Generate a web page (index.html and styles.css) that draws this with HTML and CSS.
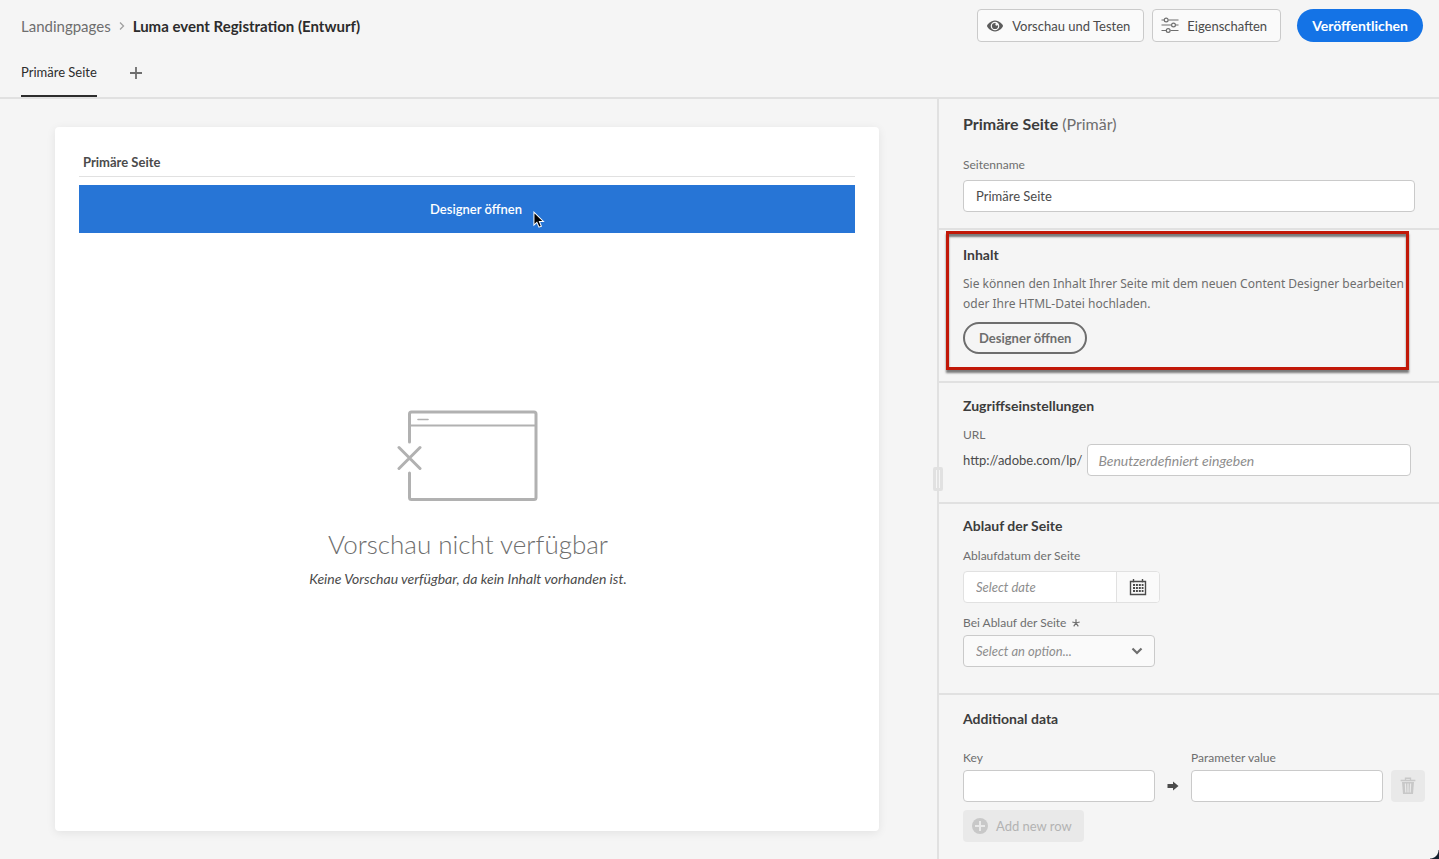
FILE: index.html
```html
<!DOCTYPE html>
<html lang="de">
<head>
<meta charset="utf-8">
<meta name="viewport" content="width=device-width, initial-scale=1">
<title>Luma event Registration (Entwurf)</title>
<link rel="stylesheet" href="styles.css">
</head>
<body>
<div class="app">
  <header class="header">
    <div class="topbar">
      <nav class="breadcrumb" aria-label="Breadcrumb">
        <a class="crumb" href="#">Landingpages</a>
        <svg class="crumb-arrow" width="6" height="10" viewBox="0 0 6 10"><path d="M1 1.500 4.500 5 1 8.500" fill="none" stroke="#a0a0a0" stroke-width="1.300"/></svg>
        <h1 class="page-title">Luma event Registration (Entwurf)</h1>
      </nav>
      <div class="actions">
        <button class="btn" type="button">
          <svg width="18" height="18" viewBox="0 0 18 18"><path d="M9 3.600C4.600 3.600 1 7.800 1 9s3.600 5.400 8 5.400S17 10.200 17 9s-3.600-5.400-8-5.400z" fill="#5c5c5c"/><circle cx="9" cy="9" r="4.300" fill="#fafafa"/><path d="M9 5.900a3.100 3.100 0 1 0 3.100 3.100c0-.4-.1-.7-.2-1a1.300 1.300 0 0 1-1.200.7A1.400 1.400 0 0 1 9.300 7.300c0-.6.300-1 .7-1.200-.3-.1-.6-.2-1-.2z" fill="#5c5c5c"/></svg>
          <span>Vorschau und Testen</span>
        </button>
        <button class="btn" type="button">
          <svg width="18" height="18" viewBox="0 0 18 18" fill="none" stroke="#6e6e6e" stroke-width="1.200"><path d="M.5 3H3M7.500 3H17.500M.5 8H10M15 8H17.500M.5 13.500H5M9.500 13.500H17.500"/><circle cx="5.200" cy="3" r="1.900"/><circle cx="12.500" cy="8" r="1.900"/><circle cx="7.200" cy="13.500" r="1.900"/></svg>
          <span>Eigenschaften</span>
        </button>
        <button class="btn-primary" type="button">Veröffentlichen</button>
      </div>
    </div>
    <div class="tabs">
      <button class="tab" type="button">Primäre Seite</button>
      <button class="tab-add" type="button" aria-label="Seite hinzufügen">
        <svg width="14" height="14" viewBox="0 0 14 14"><path d="M7 1v12M1 7h12" stroke="#6e6e6e" stroke-width="1.800"/></svg>
      </button>
    </div>
  </header>

  <main class="workspace">
    <section class="canvas">
      <article class="card">
        <h2 class="card-title">Primäre Seite</h2>
        <button class="banner" type="button">Designer öffnen
          <svg class="cursor" width="12" height="18" viewBox="0 0 13 19"><path d="M1 1v14l3.200-3 2.300 5.300 2.600-1.100L6.900 11H11.300z" fill="#000" stroke="#fff" stroke-width="1.100"/></svg>
        </button>
        <div class="empty">
          <svg class="empty-art" width="142" height="92" viewBox="0 0 142 92" fill="none" stroke="#b1b1b1" stroke-width="3" stroke-linecap="round"><path d="M12.500 32V4q0-2 2-2H137q2 0 2 2V87.500q0 2-2 2H14.500q-2 0-2-2V63"/><path d="M13 15.500H138" stroke-width="2"/><path d="M21 9.500H31" stroke-width="1.600"/><path d="M2 37.500 23 58.500M23 37.500 2 58.500"/></svg>
          <h2 class="empty-title">Vorschau nicht verfügbar</h2>
          <p class="empty-text">Keine Vorschau verfügbar, da kein Inhalt vorhanden ist.</p>
        </div>
      </article>
    </section>

    <aside class="panel">
      <span class="handle"></span>
      <section class="group group-name">
        <h2 class="panel-title">Primäre Seite <span class="muted">(Primär)</span></h2>
        <label class="label" for="name">Seitenname</label>
        <input class="input" id="name" type="text" value="Primäre Seite">
      </section>
      <section class="group group-content">
        <div class="highlight">
          <h3 class="group-title">Inhalt</h3>
          <p class="desc">Sie können den Inhalt Ihrer Seite mit dem neuen Content Designer bearbeiten oder Ihre HTML-Datei hochladen.</p>
          <button class="btn-outline" type="button">Designer öffnen</button>
        </div>
      </section>
      <section class="group group-access">
        <h3 class="group-title">Zugriffseinstellungen</h3>
        <label class="label" for="url">URL</label>
        <div class="url-row">
          <span class="url-prefix">http://adobe.com/lp/</span>
          <input class="input" id="url" type="text" placeholder="Benutzerdefiniert eingeben">
        </div>
      </section>
      <section class="group group-expiry">
        <h3 class="group-title">Ablauf der Seite</h3>
        <label class="label" for="date">Ablaufdatum der Seite</label>
        <div class="date">
          <input class="date-input" id="date" type="text" placeholder="Select date">
          <button class="date-btn" type="button" aria-label="Kalender">
            <svg width="18" height="18" viewBox="0 0 18 18"><path d="M1.500 3.500H16.500V16.500H1.500zM4.500 1V4.500M13.500 1V4.500" fill="none" stroke="#4b4b4b" stroke-width="1.400"/><path d="M4 7H14.500M4 10H14.500M4 13H14.500" stroke="#4b4b4b" stroke-width="2" stroke-dasharray="2 .9"/></svg>
          </button>
        </div>
        <label class="label" for="onexpiry">Bei Ablauf der Seite
          <svg class="star" width="8" height="8" viewBox="0 0 8 8"><path d="M4 .2V4M.3 3 4 4 7.700 3M1.700 7.300 4 4 6.300 7.300" fill="none" stroke="#6e6e6e" stroke-width="1.200"/></svg>
        </label>
        <div class="select-wrap">
          <select class="select" id="onexpiry"><option>Select an option...</option></select>
          <svg class="select-arrow" width="12" height="8" viewBox="0 0 12 8"><path d="M1.500 1.500 6 6 10.500 1.500" fill="none" stroke="#6e6e6e" stroke-width="2.200"/></svg>
        </div>
      </section>
      <section class="group group-data">
        <h3 class="group-title">Additional data</h3>
        <div class="pairs">
          <label class="label pair-label" for="key">Key</label>
          <label class="label pair-label pair-value" for="value">Parameter value</label>
          <input class="input pair-key" id="key" type="text">
          <svg class="pair-arrow" width="12" height="10" viewBox="0 0 12 10"><path d="M.5 3H6V.5L11.500 5 6 9.500V7H.5z" fill="#4b4b4b"/></svg>
          <input class="input" id="value" type="text">
          <button class="btn-trash" type="button" disabled aria-label="Zeile löschen">
            <svg width="16" height="18" viewBox="0 0 16 18"><path d="M5.500 3V1.300H10.500V3M.6 3.500H15.400" fill="none" stroke="#c8c8c8" stroke-width="1.400"/><path d="M2 5H14L13 17H3z" fill="#c8c8c8"/><path d="M5.400 6.500 5.800 15.500M8 6.500V15.500M10.600 6.500 10.200 15.500" stroke="#e9e9e9" stroke-width="1.200"/></svg>
          </button>
        </div>
        <button class="btn-add" type="button" disabled>
          <svg width="16" height="16" viewBox="0 0 16 16"><circle cx="8" cy="8" r="8" fill="#c8c8c8"/><path d="M8 3V13M3 8H13" stroke="#e9e9e9" stroke-width="2"/></svg>
          <span>Add new row</span>
        </button>
      </section>
      <span class="corner"></span>
    </aside>
  </main>
</div>
</body>
</html>
```
FILE: styles.css
```css
* { box-sizing: border-box; }

body {
  margin: 0;
  background: #f5f5f5;
  color: #4b4b4b;
  font: 13px/20px Lato, "Noto Sans", sans-serif;
}

h1, h2, h3, p { margin: 0; }
button, input, select { font: inherit; color: inherit; margin: 0; }
button { cursor: pointer; }
svg { flex: none; }

.app { display: flex; flex-direction: column; min-height: 100vh; }

.header { border-bottom: 2px solid #e1e1e1; }
.topbar { display: flex; justify-content: space-between; align-items: flex-start; padding: 9px 16px 0 21px; }
.breadcrumb { display: flex; align-items: center; gap: 8px; height: 34px; font-size: 15px; }
.crumb { color: #6e6e6e; text-decoration: none; }
.page-title { color: #2c2c2c; font-size: 15px; font-weight: 700; }
.actions { display: flex; gap: 8px; }
.btn { display: flex; align-items: center; gap: 8px; height: 33px; padding: 0 13px 0 8px; border: 1px solid #cacaca; border-radius: 4px; background: #fafafa; }
.btn-primary { height: 33px; margin-left: 8px; padding: 0 15px; border: 0; border-radius: 17px; background: #1473e6; color: #fff; font-size: 14px; font-weight: 700; }

.tabs { display: flex; gap: 32px; padding: 6px 21px 0; }
.tab { height: 48px; padding: 0; border: 0; border-bottom: 2px solid #2c2c2c; background: none; color: #2c2c2c; }
.tab-add { display: flex; align-items: center; height: 48px; padding: 0; border: 0; background: none; }

.workspace { flex: 1; display: grid; grid-template-columns: minmax(0, 1fr) 502px; }
.canvas { display: flex; padding: 28px 58px 28px 55px; }
.card { flex: 1; display: flex; flex-direction: column; padding: 24px; border-radius: 4px; background: #fff; box-shadow: 0 2px 10px rgba(0, 0, 0, .08); }
.card-title { padding: 1px 4px 4px; border-bottom: 1px solid #e1e1e1; font-size: 13px; font-weight: 700; }
.banner { position: relative; height: 48px; margin-top: 8px; padding: 0 0 0 18px; border: 0; background: #2775d6; color: #fff; font-weight: 600; }
.cursor { position: absolute; left: calc(50% + 66px); top: 26px; }
.empty { display: flex; flex-direction: column; align-items: center; padding: 177px 0 0 2px; text-align: center; }
.empty-title { margin-top: 22px; color: #6e6e6e; font-size: 26px; line-height: 40px; font-weight: 300; }
.empty-text { margin-top: 5px; font-size: 14px; font-style: italic; }

.panel { position: relative; border-left: 2px solid #e1e1e1; }
.handle { position: absolute; left: -6px; top: 368px; width: 10px; height: 24px; border: 3px solid #e1e1e1; border-radius: 2px; background: linear-gradient(90deg, #f5f5f5 1px, #e1e1e1 1px 3px, #f5f5f5 3px); }
.group { padding: 0 24px; border-bottom: 2px solid #e1e1e1; }
.panel-title { color: #3c3c3c; font-size: 16px; font-weight: 700; }
.muted { color: #6e6e6e; font-weight: 400; }
.group-title { color: #3c3c3c; font-size: 14px; font-weight: 700; }
.label { display: block; color: #6e6e6e; font-size: 12px; line-height: 16px; }
.input { display: block; width: 100%; height: 32px; padding: 0 12px; border: 1px solid #cacaca; border-radius: 4px; background: #fff; }
::placeholder { color: #8e8e8e; font-style: italic; opacity: 1; }

.group-name { padding-top: 15px; padding-bottom: 16px; }
.group-name .label { margin: 23px 0 7px; }

.group-content { padding: 1px 30px 11px 7px; }
.highlight { padding: 11px 2px 13px 14px; border: 3px solid #c11808; box-shadow: 0 3px 2px rgba(0, 0, 0, .5), inset 0 3px 2px rgba(0, 0, 0, .5); }
.desc { margin: 9px 0 8px; color: #6e6e6e; font-family: "Noto Sans", sans-serif; font-size: 12px; }
.btn-outline { height: 32px; padding: 0 14px; border: 2px solid #6e6e6e; border-radius: 16px; background: none; color: #6e6e6e; font-weight: 700; }

.group-access { padding: 13px 28px 26px 24px; }
.group-access .label { margin: 11px 0 1px; }
.url-row { display: flex; align-items: center; gap: 5px; }
.url-prefix { flex: none; }
.url-row .input { flex: 1; min-width: 0; padding: 0 10px; font-size: 14px; }

.group-expiry { padding-top: 12px; padding-bottom: 26px; }
.group-expiry .label { margin: 12px 0 7px; }
.date { display: flex; width: 197px; height: 32px; border: 1px solid #e1e1e1; border-radius: 4px; background: #fff; overflow: hidden; }
.date-input { flex: 1; min-width: 0; padding: 0 12px; border: 0; background: none; }
.date-btn { display: flex; align-items: center; justify-content: center; width: 43px; padding: 0; border: 0; border-left: 1px solid #e1e1e1; background: #fafafa; }
.group-expiry .date + .label { margin: 12px 0 4px; }
.star { margin-left: 2px; }
.select-wrap { position: relative; width: 192px; }
.select { width: 100%; height: 32px; padding: 0 12px; border: 1px solid #cacaca; border-radius: 4px; background: #fafafa; color: #8e8e8e; font-style: italic; appearance: none; }
.select-arrow { position: absolute; right: 12px; top: 12px; pointer-events: none; }

.group-data { padding: 14px 14px 16px 24px; border-bottom: 0; }
.pairs { display: grid; grid-template-columns: 192px 36px 192px 34px; row-gap: 4px; align-items: center; margin-top: 21px; }
.pair-value { grid-column: 3 / 5; }
.pair-key { grid-column: 1; }
.pair-arrow { justify-self: center; }
.btn-trash { display: flex; align-items: center; justify-content: center; width: 34px; height: 32px; margin-left: 8px; padding: 0; border: 0; border-radius: 4px; background: #e9e9e9; }
.btn-add { display: flex; align-items: center; gap: 8px; height: 32px; margin-top: 8px; padding: 0 12px 0 9px; border: 0; border-radius: 4px; background: #e9e9e9; color: #b3b3b3; }
.corner { position: absolute; right: 0; bottom: 0; width: 9px; height: 9px; background: radial-gradient(circle at 0 0, transparent 8px, #14202e 9px); }
```
